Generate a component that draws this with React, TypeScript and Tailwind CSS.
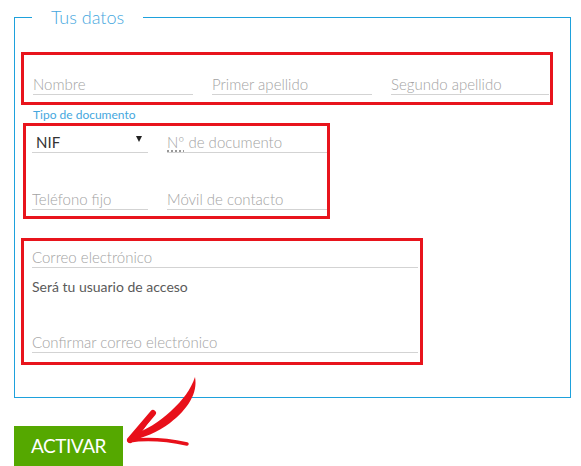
import React from "react";

function Field({ label, w, className = "" }: { label: React.ReactNode; w: string; className?: string }) {
  return (
    <div className={`${w} h-[21px] border-b border-[#d3d3d3] text-[15px] leading-[20px] font-light text-[#a3a3a3] whitespace-nowrap overflow-hidden ${className}`}>
      {label}
    </div>
  );
}

export default function App() {
  return (
    <div className="relative w-[581px] h-[466px] overflow-hidden bg-white pt-[6px] pl-[14px]" style={{ fontFamily: "Lato, 'Open Sans', sans-serif" }}>
      <fieldset className="w-[557px] border border-[#1ea1dc] pb-[32px]">
        <legend className="ml-[17px] px-[19px] text-[18px] leading-[22px] font-light text-[#45a7de]">Tus datos</legend>

        <div className="mt-[24px] ml-[6px] w-[532px] border-[3px] border-[#e8141c] pt-[19px] pb-[7px] pl-[9px] flex gap-[19px] overflow-hidden">
          <Field label="Nombre" w="w-[160px] shrink-0" />
          <Field label="Primer apellido" w="w-[160px] shrink-0" />
          <Field label="Segundo apellido" w="w-[158px] shrink-0" />
        </div>

        <div className="mt-[3px] ml-[18px] h-[14px] text-[12px] leading-[14px] text-[#45a7de] mb-[1px]">Tipo de documento</div>

        <div className="ml-[8px] w-[307px] border-[3px] border-[#e8141c] pt-[6px] pb-[6px] pl-[6px] flex flex-col gap-[36px] overflow-hidden">
          <div className="flex gap-[19px]">
            <div className="w-[116px] shrink-0 h-[21px] border-b border-[#d3d3d3] text-[15px] leading-[20px] text-[#333] flex items-center justify-between pl-[4px] pr-[6px]">
              <span>NIF</span>
              <svg width="6" height="6" viewBox="0 0 6 6" className="mb-[6px]">
                <path d="M0 0 L6 0 L3 6 Z" fill="#222" />
              </svg>
            </div>
            <Field
              label={
                <>
                  <span className="underline decoration-dotted decoration-[#777] underline-offset-[3px]">Nº</span> de documento
                </>
              }
              w="w-[160px] shrink-0"
            />
          </div>
          <div className="flex gap-[19px]">
            <Field label="Teléfono fijo" w="w-[116px] shrink-0" />
            <Field label="Móvil de contacto" w="w-[160px] shrink-0" />
          </div>
        </div>

        <div className="mt-[19px] ml-[6px] w-[402px] border-[3px] border-[#e8141c] pt-[6px] pb-[9px] pl-[8px] pr-[2px]">
          <Field label="Correo electrónico" w="w-full" />
          <div className="mt-[10px] text-[14px] leading-[18px] text-[#5a5a5a]">Será tu usuario de acceso</div>
          <Field label="Confirmar correo electrónico" w="w-full" className="mt-[36px]" />
        </div>
      </fieldset>

      <button className="mt-[28px] w-[109px] h-[44px] bg-[#55a800] text-white text-[19px] tracking-[-0.5px] flex items-center justify-center pb-[3px]">
        ACTIVAR
      </button>

      <svg className="pointer-events-none absolute inset-0" width="581" height="466" viewBox="0 0 581 466">
        <path d="M195 377 C 198 393, 188 409, 170 423 C 158 432, 143 438, 128 442 L 131 436 C 146 430, 159 422, 171 411 C 183 400, 191 389, 195 377 Z" fill="#e8101a" />
        <path d="M130 440 L 153 413" stroke="#e8101a" strokeWidth="6" strokeLinecap="round" />
        <path d="M129 441 C 148 438, 168 440, 187 444" stroke="#e8101a" strokeWidth="3.5" fill="none" strokeLinecap="round" />
        <path d="M133 440 C 141 430, 146 422, 151 416" stroke="#e8101a" strokeWidth="4" fill="none" strokeLinecap="round" />
      </svg>
    </div>
  );
}
